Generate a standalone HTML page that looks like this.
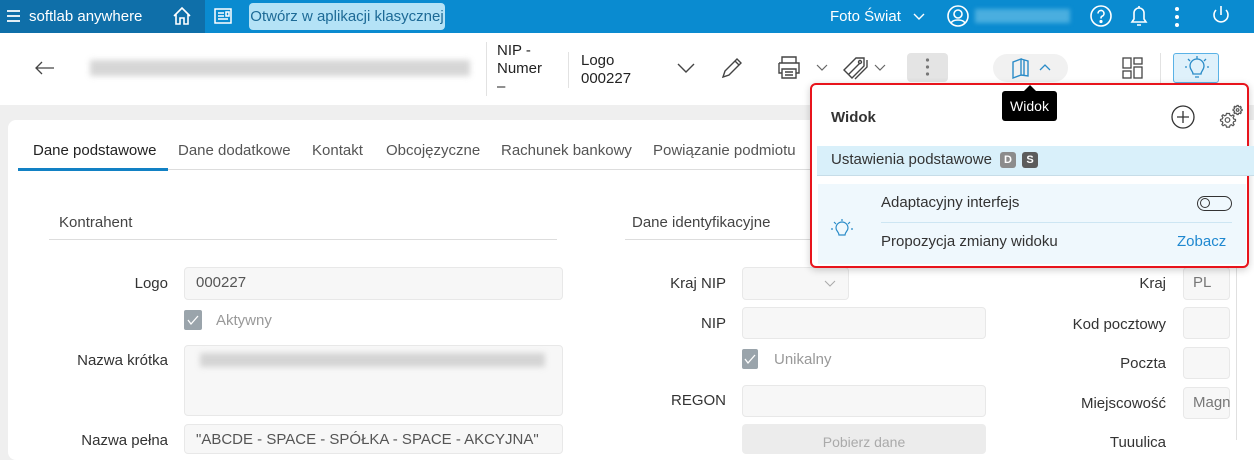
<!DOCTYPE html>
<html><head><meta charset="utf-8"><style>
*{box-sizing:border-box;margin:0;padding:0}
body{width:1254px;height:440px;overflow:hidden;font-family:"Liberation Sans",sans-serif;background:#efefef;position:relative;color:#333;font-size:14px}
.abs{position:absolute}
.top{left:0;top:0;width:1254px;height:33px;background:#0a8bd0}
.topl{left:0;top:0;width:205px;height:33px;background:#0f6fa9}
.white{color:#fff}
.hdr{left:0;top:33px;width:1254px;height:72px;background:#fff}
.card{left:8px;top:120px;width:1260px;height:340px;background:#fff;border-radius:8px}
.inp{background:#f7f7f7;border:1px solid #e8e8e8;border-radius:4px}
.lbl{font-size:14px;color:#333;text-align:right}
.cb{width:18px;height:20px;background:#9aa4ab;border-radius:2px}
.pop{left:810px;top:83px;width:439px;height:185px;background:#fff;border:2px solid #e8141c;border-radius:6px;box-shadow:0 2px 8px rgba(0,0,0,.2)}
</style></head><body>
<div class="abs top"></div><div class="abs topl"></div>
<svg class="abs" style="left:6px;top:8px" width="16" height="16"><path d="M1 3h13M1 8h13M1 13h13" stroke="#fff" stroke-width="1.8"/></svg>
<div class="abs white" style="left:29px;top:8px;font-size:15px">softlab anywhere</div>
<svg class="abs" style="left:171px;top:5px" width="22" height="22" fill="none" stroke="#fff" stroke-width="1.6"><path d="M3 11L11 3l8 8M5 9v10h4v-6h4v6h4V9"/></svg>
<svg class="abs" style="left:213px;top:6px" width="22" height="20" fill="none" stroke="#fff" stroke-width="1.5"><rect x="2" y="3" width="16" height="14"/><path d="M5 7h6M5 10h6M5 13h10M13 6h3v4h-3z"/></svg>
<div class="abs" style="left:249px;top:3px;width:196px;height:27px;background:#b4e2f6;border-radius:4px;color:#1d6a96;font-size:15px;text-align:center;line-height:27px">Otwórz w aplikacji klasycznej</div>
<div class="abs white" style="left:830px;top:8px;font-size:15px">Foto Świat</div>
<svg class="abs" style="left:912px;top:12px" width="14" height="10" fill="none" stroke="#fff" stroke-width="1.4"><path d="M2 2l5 5 5-5"/></svg>
<svg class="abs" style="left:946px;top:4px" width="24" height="24" fill="none" stroke="#fff" stroke-width="1.6"><circle cx="12" cy="12" r="10"/><circle cx="12" cy="10" r="4"/><path d="M5 19c2-4 12-4 14 0"/></svg>
<div class="abs" style="left:975px;top:9px;width:95px;height:14px;background:#4aaedf;filter:blur(2px)"></div>
<svg class="abs" style="left:1089px;top:4px" width="24" height="24" fill="none" stroke="#fff" stroke-width="1.6"><circle cx="12" cy="12" r="10"/><path d="M9 9.5a3 3 0 1 1 4 2.8c-1 .4-1 1-1 2.2"/><circle cx="12" cy="17.5" r=".8" fill="#fff"/></svg>
<svg class="abs" style="left:1127px;top:3px" width="24" height="26" fill="none" stroke="#fff" stroke-width="1.6"><path d="M5 19h14l-2-3v-6a5 5 0 0 0-10 0v6z M10 22h4M12 3v2"/></svg>
<svg class="abs" style="left:1174px;top:6px" width="6" height="22" fill="#fff"><circle cx="3" cy="3" r="2"/><circle cx="3" cy="11" r="2"/><circle cx="3" cy="19" r="2"/></svg>
<svg class="abs" style="left:1209px;top:3px" width="24" height="26" fill="none" stroke="#fff" stroke-width="1.6"><path d="M12 3v9M7 7a7 7 0 1 0 10 0"/></svg>

<div class="abs hdr"></div>
<svg class="abs" style="left:34px;top:60px" width="22" height="16" fill="none" stroke="#444" stroke-width="1.3"><path d="M20 8H2M8 2L2 8l6 6"/></svg>
<div class="abs" style="left:90px;top:60px;width:380px;height:16px;background:#ccc;filter:blur(3px);opacity:.8"></div>
<div class="abs" style="left:486px;top:42px;width:1px;height:54px;background:#e2e2e2"></div>
<div class="abs" style="left:497px;top:42px;font-size:15px;line-height:18px;color:#222">NIP -<br>Numer<br>–</div>
<div class="abs" style="left:568px;top:52px;width:1px;height:36px;background:#e2e2e2"></div>
<div class="abs" style="left:581px;top:52px;font-size:15px;line-height:18px;color:#222">Logo<br>000227</div>
<svg class="abs" style="left:676px;top:62px" width="20" height="12" fill="none" stroke="#444" stroke-width="1.4"><path d="M2 2l8 8 8-8"/></svg>
<svg class="abs" style="left:719px;top:55px" width="26" height="26" fill="none" stroke="#444" stroke-width="1.4"><path d="M4 22l2-6L18 4l4 4-12 12zM16 6l4 4"/></svg>
<svg class="abs" style="left:775px;top:54px" width="28" height="28" fill="none" stroke="#444" stroke-width="1.4"><path d="M7 9V3h14v6M4 9h20v10h-3M7 19H4V9M7 15h14v9H7zM10 18h8M10 21h8"/></svg>
<svg class="abs" style="left:816px;top:64px" width="12" height="8" fill="none" stroke="#666" stroke-width="1.2"><path d="M1 1l5 5 5-5"/></svg>
<svg class="abs" style="left:841px;top:54px" width="30" height="28" fill="none" stroke="#444" stroke-width="1.4"><path d="M3 16L15 4h8v8L11 24zM8 20L19 9M26 6v7L14 25"/><circle cx="19" cy="8" r="1.5"/></svg>
<svg class="abs" style="left:874px;top:64px" width="12" height="8" fill="none" stroke="#666" stroke-width="1.2"><path d="M1 1l5 5 5-5"/></svg>
<div class="abs" style="left:907px;top:53px;width:41px;height:29px;background:#e4e4e4;border-radius:4px"></div>
<svg class="abs" style="left:925px;top:57px" width="5" height="20" fill="#777"><circle cx="2.5" cy="3" r="1.6"/><circle cx="2.5" cy="10" r="1.6"/><circle cx="2.5" cy="17" r="1.6"/></svg>
<div class="abs" style="left:993px;top:54px;width:75px;height:28px;background:#f1f1f1;border-radius:14px"></div>
<svg class="abs" style="left:1009px;top:56px" width="24" height="24" fill="none" stroke="#2b8cc8" stroke-width="1.4"><path d="M4 6l8-3v16l-8 3zM12 3l7 2v15l-7-1M15 4l0 15"/></svg>
<svg class="abs" style="left:1039px;top:63px" width="12" height="8" fill="none" stroke="#2b8cc8" stroke-width="1.3"><path d="M1 7l5-5 5 5"/></svg>
<svg class="abs" style="left:1121px;top:56px" width="24" height="26" fill="none" stroke="#444" stroke-width="1.3"><rect x="2" y="2" width="8" height="10"/><rect x="13" y="2" width="8" height="6"/><rect x="2" y="15" width="8" height="7"/><rect x="13" y="11" width="8" height="11"/></svg>
<div class="abs" style="left:1160px;top:53px;width:1px;height:30px;background:#e2e2e2"></div>
<div class="abs" style="left:1173px;top:53px;width:46px;height:30px;background:#dff1fb;border:1px solid #5ab2e6;border-radius:3px"></div>
<svg class="abs" style="left:1184px;top:55px" width="26" height="26" fill="none" stroke="#2b8cc8" stroke-width="1.3"><path d="M9 19c0-3-3-4-3-8a7 7 0 0 1 14 0c0 4-3 5-3 8zM11 22h4M13 1v3M4 4l2 2M22 4l-2 2M1 12h2M23 12h2"/></svg>

<div class="abs card"></div>
<div class="abs" style="left:18px;top:169px;width:792px;height:1px;background:#ddd"></div>
<div class="abs" style="left:18px;top:168px;width:150px;height:3px;background:#1281c4"></div>
<div class="abs" style="left:33px;top:142px;font-size:15px;color:#222">Dane podstawowe</div>
<div class="abs" style="left:178px;top:142px;font-size:15px;color:#555">Dane dodatkowe</div>
<div class="abs" style="left:312px;top:142px;font-size:15px;color:#555">Kontakt</div>
<div class="abs" style="left:386px;top:142px;font-size:15px;color:#555">Obcojęzyczne</div>
<div class="abs" style="left:501px;top:142px;font-size:15px;color:#555">Rachunek bankowy</div>
<div class="abs" style="left:653px;top:142px;font-size:15px;color:#555">Powiązanie podmiotu</div>

<div class="abs" style="left:59px;top:214px;font-size:15px;color:#444">Kontrahent</div>
<div class="abs" style="left:49px;top:239px;width:508px;height:1px;background:#ddd"></div>
<div class="abs lbl" style="left:60px;top:275px;width:108px;font-size:15px">Logo</div>
<div class="abs inp" style="left:184px;top:267px;width:379px;height:33px"></div>
<div class="abs" style="left:196px;top:274px;font-size:15px;color:#555">000227</div>
<div class="abs cb" style="left:184px;top:310px"></div>
<svg class="abs" style="left:186px;top:313px" width="14" height="14" fill="none" stroke="#fff" stroke-width="1.3"><path d="M2 7l3 4 7-8"/></svg>
<div class="abs" style="left:216px;top:312px;font-size:15px;color:#999">Aktywny</div>
<div class="abs lbl" style="left:40px;top:352px;width:128px;font-size:15px">Nazwa krótka</div>
<div class="abs inp" style="left:184px;top:345px;width:379px;height:71px"></div>
<div class="abs" style="left:200px;top:353px;width:345px;height:14px;background:#ccc;filter:blur(3px);opacity:.8"></div>
<div class="abs lbl" style="left:40px;top:432px;width:128px;font-size:15px">Nazwa pełna</div>
<div class="abs inp" style="left:184px;top:424px;width:379px;height:30px"></div>
<div class="abs" style="left:196px;top:431px;font-size:15px;color:#555">"ABCDE - SPACE - SPÓŁKA - SPACE - AKCYJNA"</div>

<div class="abs" style="left:632px;top:214px;font-size:15px;color:#444">Dane identyfikacyjne</div>
<div class="abs" style="left:625px;top:239px;width:190px;height:1px;background:#ddd"></div>
<div class="abs lbl" style="left:620px;top:275px;width:106px;font-size:15px">Kraj NIP</div>
<div class="abs inp" style="left:742px;top:267px;width:107px;height:33px"></div>
<svg class="abs" style="left:824px;top:280px" width="12" height="8" fill="none" stroke="#aaa" stroke-width="1"><path d="M1 1l5 5 5-5"/></svg>
<div class="abs lbl" style="left:620px;top:315px;width:106px;font-size:15px">NIP</div>
<div class="abs inp" style="left:742px;top:307px;width:244px;height:32px"></div>
<div class="abs cb" style="left:742px;top:349px;width:16px"></div>
<svg class="abs" style="left:743px;top:352px" width="14" height="14" fill="none" stroke="#fff" stroke-width="1.3"><path d="M2 7l3 4 7-8"/></svg>
<div class="abs" style="left:774px;top:351px;font-size:15px;color:#999">Unikalny</div>
<div class="abs lbl" style="left:620px;top:392px;width:106px;font-size:15px">REGON</div>
<div class="abs inp" style="left:742px;top:385px;width:244px;height:32px"></div>
<div class="abs" style="left:742px;top:424px;width:244px;height:30px;background:#ececec;border-radius:4px;text-align:center;color:#aaa;padding-top:10px;font-size:14px">Pobierz dane</div>

<div class="abs lbl" style="left:1040px;top:275px;width:126px;font-size:15px">Kraj</div>
<div class="abs inp" style="left:1183px;top:267px;width:47px;height:33px"></div>
<div class="abs" style="left:1193px;top:274px;font-size:15px;color:#777">PL</div>
<div class="abs lbl" style="left:1040px;top:316px;width:126px;font-size:15px">Kod pocztowy</div>
<div class="abs inp" style="left:1183px;top:307px;width:47px;height:32px"></div>
<div class="abs lbl" style="left:1040px;top:355px;width:126px;font-size:15px">Poczta</div>
<div class="abs inp" style="left:1183px;top:347px;width:47px;height:32px"></div>
<div class="abs lbl" style="left:1040px;top:395px;width:126px;font-size:15px">Miejscowość</div>
<div class="abs inp" style="left:1183px;top:387px;width:47px;height:32px"></div>
<div class="abs" style="left:1193px;top:394px;font-size:15px;color:#777">Magn</div>
<div class="abs lbl" style="left:1040px;top:434px;width:126px;font-size:15px">Tuuulica</div>
<div class="abs" style="left:1236px;top:170px;width:1px;height:270px;background:#e0e0e0"></div>

<div class="abs pop"></div>
<div class="abs" style="left:1002px;top:91px;width:55px;height:30px;background:#000;border-radius:3px;color:#fff;font-size:14px;text-align:center;line-height:30px">Widok</div>
<div class="abs" style="left:1024px;top:85px;width:0;height:0;border-left:6px solid transparent;border-right:6px solid transparent;border-bottom:6px solid #000"></div>
<div class="abs" style="left:831px;top:109px;font-size:15px;font-weight:bold;color:#333">Widok</div>
<svg class="abs" style="left:1171px;top:105px" width="24" height="24" fill="none" stroke="#333" stroke-width="1.3"><circle cx="12" cy="12" r="11"/><path d="M12 6v12M6 12h12"/></svg>
<svg class="abs" style="left:1219px;top:104px" width="26" height="26" fill="none" stroke="#555" stroke-width="1.2">
<path d="M9 9.5l1.5 0 .5 1.8 1.4.6 1.6-1 1.1 1.1-1 1.6.6 1.4 1.8.5v1.6l-1.8.5-.6 1.4 1 1.6-1.1 1.1-1.6-1-1.4.6-.5 1.8H7.5l-.5-1.8-1.4-.6-1.6 1-1.1-1.1 1-1.6-.6-1.4L1.5 17v-1.6l1.8-.5.6-1.4-1-1.6 1.1-1.1 1.6 1 1.4-.6.5-1.8z"/><circle cx="8.5" cy="16" r="2.3"/>
<path d="M18 1.5h1.2l.3 1.1.9.4 1-.6.8.8-.6 1 .4.9 1.1.3v1.2l-1.1.3-.4.9.6 1-.8.8-1-.6-.9.4-.3 1.1H18l-.3-1.1-.9-.4-1 .6-.8-.8.6-1-.4-.9-1.1-.3V5.3l1.1-.3.4-.9-.6-1 .8-.8 1 .6.9-.4z"/><circle cx="18.6" cy="6" r="1.3"/></svg>
<div class="abs" style="left:817px;top:146px;width:437px;height:30px;background:#d9f0fa;border-bottom:1px solid #c7dde8"></div>
<div class="abs" style="left:831px;top:151px;font-size:15px;color:#333">Ustawienia podstawowe</div>
<div class="abs" style="left:1000px;top:152px;width:16px;height:16px;background:#8c8c8c;border-radius:3px;color:#fff;font-size:11px;font-weight:bold;text-align:center;line-height:16px">D</div>
<div class="abs" style="left:1022px;top:152px;width:16px;height:16px;background:#5c5c5c;border-radius:3px;color:#fff;font-size:11px;font-weight:bold;text-align:center;line-height:16px">S</div>
<div class="abs" style="left:818px;top:184px;width:428px;height:80px;background:#eff8fd"></div>
<svg class="abs" style="left:830px;top:218px" width="24" height="22" fill="none" stroke="#2b8cc8" stroke-width="1.2"><path d="M9 17c0-3-3-4-3-7a6 6 0 0 1 12 0c0 3-3 4-3 7zM12 1v2M4 4l2 2M20 4l-2 2M1 11h2M21 11h2"/></svg>
<div class="abs" style="left:881px;top:194px;font-size:15px;color:#333">Adaptacyjny interfejs</div>
<div class="abs" style="left:1197px;top:196px;width:35px;height:15px;border:1.3px solid #333;border-radius:8px"></div>
<div class="abs" style="left:1200px;top:198px;width:10px;height:10px;border:1.3px solid #333;border-radius:50%"></div>
<div class="abs" style="left:881px;top:222px;width:351px;height:1px;background:#cde6f3"></div>
<div class="abs" style="left:881px;top:233px;font-size:15px;color:#333">Propozycja zmiany widoku</div>
<div class="abs" style="left:1177px;top:233px;font-size:15px;color:#1e88d0">Zobacz</div>
</body></html>
